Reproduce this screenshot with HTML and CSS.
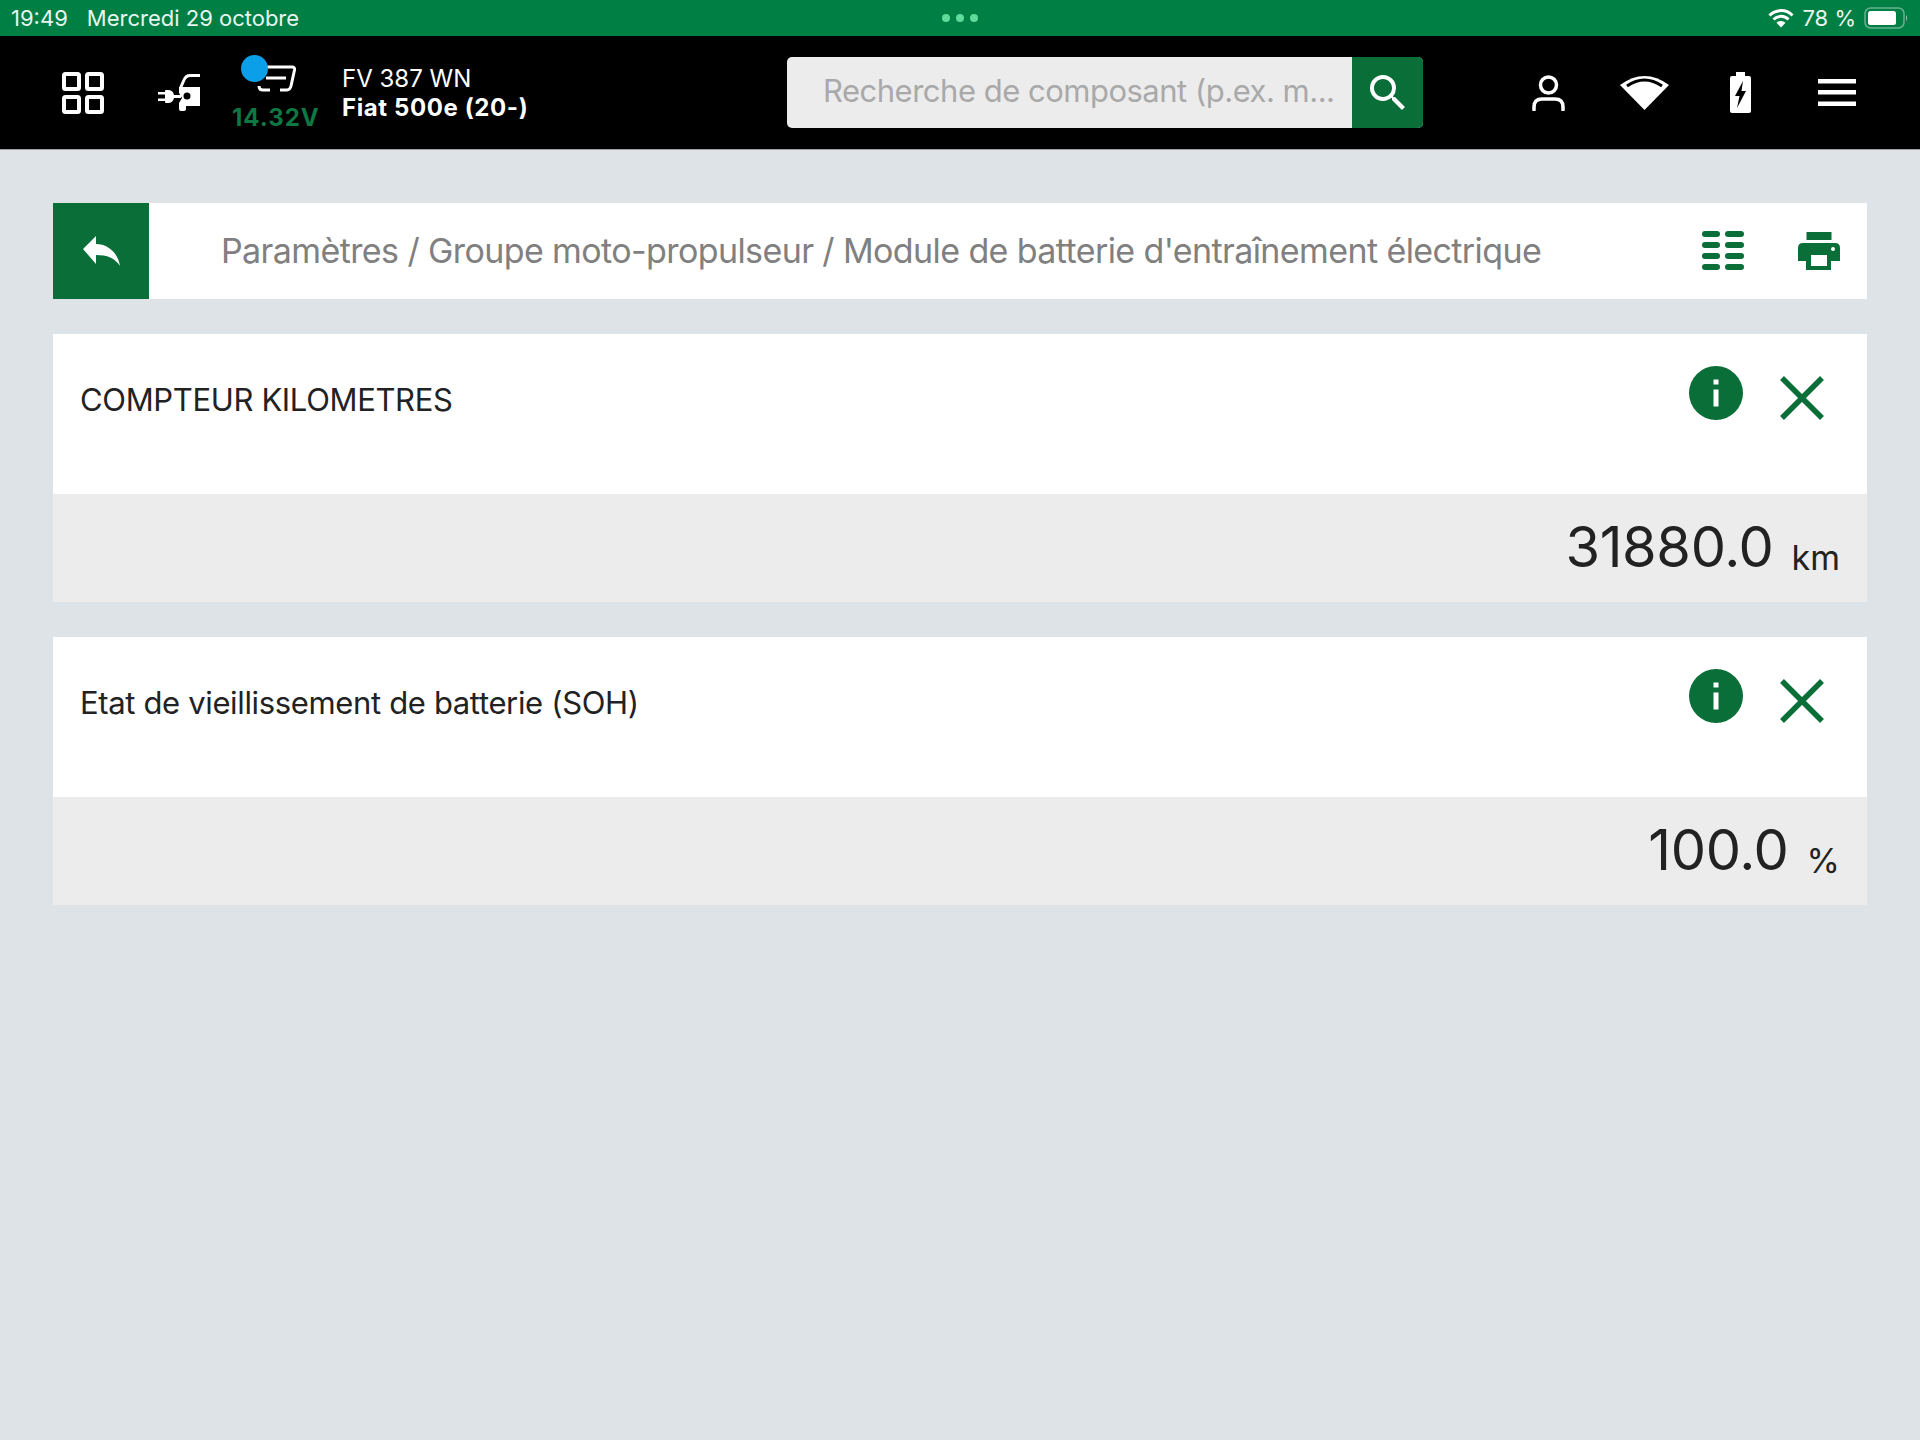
FILE: index.html
```html
<!DOCTYPE html>
<html lang="fr">
<head>
    <meta charset="UTF-8">
    <meta name="viewport" content="width=device-width, initial-scale=1.0">
    <title>Paramètres</title>
    <link rel="stylesheet" href="styles.css">
</head>
<body>
    <!-- barre de statut -->
    <div class="status-bar">
        <div class="status-left"><span>19:49</span><span>Mercredi 29 octobre</span></div>
        <div class="status-dots"><i></i><i></i><i></i></div>
        <div class="status-right">
            <svg class="status-wifi" width="26" height="19" viewBox="0 0 26 19">
                <path d="M1.5 6.5a16 16 0 0 1 23 0M5.5 10.5a10.500 10.500 0 0 1 15 0" fill="none" stroke="#fff" stroke-width="3"/>
                <path d="M13 18.500L8.500 13.800a6.500 6.500 0 0 1 9 0z" fill="#fff"/>
            </svg>
            <span>78 %</span>
            <svg width="45" height="22" viewBox="0 0 45 22">
                <rect x="1" y="1" width="39" height="20" rx="5.500" fill="none" stroke="#fff" stroke-opacity="0.4" stroke-width="1.500"/>
                <rect x="4" y="4" width="28" height="14" rx="2.500" fill="#fff"/>
                <path d="M42 8c1.500.5 1.500 5.500 0 6z" fill="#fff" fill-opacity="0.5"/>
            </svg>
        </div>
    </div>

    <!-- en-tete -->
    <header class="top-bar">
        <div class="top-left">
            <svg class="icon-grid" width="42" height="42" viewBox="0 0 42 42" fill="none" stroke="#fff" stroke-width="4">
                <rect x="2" y="2" width="15" height="15" rx="1.500"/>
                <rect x="25" y="2" width="15" height="15" rx="1.500"/>
                <rect x="2" y="25" width="15" height="15" rx="1.500"/>
                <rect x="25" y="25" width="15" height="15" rx="1.500"/>
            </svg>
            <svg class="icon-plug" width="42" height="37" viewBox="0 0 42 37" fill="#fff">
                <path d="M42 1.500H32q-4 0-6 4.500l-3.500 8" fill="none" stroke="#fff" stroke-width="3"/>
                <path d="M21 13h21v19H28v3q0 2-2 2h-3q-2 0-2-2v-6l3-5-3-5z"/>
                <circle cx="29" cy="22" r="3.500" fill="#000"/>
                <path d="M0 18h7v-1q0-1 1-1h2q5 0 6 5h7v3h-7q-1 5-6 5H8q-1 0-1-1v-1H0v-2.500h7v-4H0z"/>
            </svg>
            <div class="volt-box">
                <span class="volt-dot"></span>
                <svg class="icon-car" width="40" height="28" viewBox="0 0 40 28" fill="none" stroke="#fff" stroke-width="3">
                    <path d="M8 3h27q3 0 2.500 3L34 22q-1 4-4 4h-7M13 26H6q-4 0-4-4"/>
                    <path d="M9 14h20"/>
                </svg>
                <div class="volt-text">14.32V</div>
            </div>
            <div class="vehicle">
                <div>FV 387 WN</div>
                <div class="vehicle-name">Fiat 500e (20-)</div>
            </div>
        </div>
        <div class="search">
            <span class="search-text">Recherche de composant (p.ex. m...</span>
            <div class="search-btn">
                <svg width="48" height="48" viewBox="0 0 24 24" fill="#fff"><path d="M15.500 14h-.79l-.28-.27A6.471 6.471 0 0 0 16 9.500 6.500 6.500 0 1 0 9.500 16c1.610 0 3.090-.59 4.230-1.570l.27.28v.79l5 4.990L20.490 19l-4.990-5zm-6 0C7.010 14 5 11.990 5 9.500S7.010 5 9.500 5 14 7.010 14 9.500 11.990 14 9.500 14z"/></svg>
            </div>
        </div>
        <div class="top-right">
            <svg class="tool-user" width="33" height="36" viewBox="0 0 33 36" fill="none" stroke="#fff" stroke-width="3.500">
                <circle cx="16.500" cy="10" r="8"/>
                <path d="M2 35v-3q0-8 8-8h13q8 0 8 8v3" stroke-linecap="round"/>
            </svg>
            <svg class="tool-wifi" width="49" height="35" viewBox="0 0 49 35">
                <path d="M24.500 35L0 10Q24.500-8 49 10z" fill="#fff"/>
                <path d="M7 11Q24.500-1 42 11" fill="none" stroke="#000" stroke-width="3"/>
            </svg>
            <svg class="tool-batt" width="21" height="41" viewBox="0 0 21 41">
                <path d="M6 0h9v4h4q2 0 2 2v33q0 2-2 2H2q-2 0-2-2V6q0-2 2-2h4z" fill="#fff"/>
                <path d="M13 9L5 24h4.500L7 36l9-17h-4.500z" fill="#000"/>
            </svg>
            <svg class="tool-menu" width="38" height="27" viewBox="0 0 38 27" fill="#fff">
                <rect width="38" height="4.500" y="0"/>
                <rect width="38" height="4.500" y="11"/>
                <rect width="38" height="4.500" y="22.500"/>
            </svg>
        </div>
    </header>

    <main class="content">
        <div class="crumb-bar">
            <div class="back-btn">
                <svg width="37" height="30" viewBox="0 0 37 30" fill="#fff"><path d="M0 13L13 0v8c12 0 22 9 24 22-5-8-13-11-24-11v9z"/></svg>
            </div>
            <div class="crumb-text">Paramètres / Groupe moto-propulseur / Module de batterie d'entraînement électrique</div>
            <div class="crumb-actions">
                <svg width="42" height="40" viewBox="0 0 42 40" fill="#0a6e38">
                    <rect x="0" y="0" width="18" height="6" rx="3"/><rect x="23" y="0" width="19" height="6" rx="3"/>
                    <rect x="0" y="11" width="18" height="6" rx="3"/><rect x="23" y="11" width="19" height="6" rx="3"/>
                    <rect x="0" y="22" width="18" height="6" rx="3"/><rect x="23" y="22" width="19" height="6" rx="3"/>
                    <rect x="0" y="33" width="18" height="6" rx="3"/><rect x="23" y="33" width="19" height="6" rx="3"/>
                </svg>
                <svg width="42" height="38" viewBox="0 0 42 38">
                    <rect x="8.500" y="0" width="25" height="8" fill="#0a6e38"/>
                    <path d="M5 11h32q5 0 5 5v13H33v9H8v-9H0V16q0-5 5-5z" fill="#0a6e38"/>
                    <rect x="13" y="23" width="16" height="11" fill="#fff"/>
                    <circle cx="35" cy="17" r="2" fill="#fff"/>
                </svg>
            </div>
        </div>

        <section class="param-card">
            <div class="param-head">
                <div class="param-title">COMPTEUR KILOMETRES</div>
                <svg class="icon-info" width="54" height="54" viewBox="0 0 54 54">
                    <circle cx="27" cy="27" r="27" fill="#0a6e38"/>
                    <rect x="24.500" y="13.500" width="5" height="5" fill="#fff"/>
                    <rect x="24.500" y="23.500" width="5" height="17" fill="#fff"/>
                </svg>
                <svg class="icon-close" width="46" height="46" viewBox="0 0 46 46"><path d="M3 3l40 40M43 3L3 43" stroke="#0a6e38" stroke-width="5.500"/></svg>
            </div>
            <div class="param-value"><span class="value-num">31880.0</span><span class="value-unit">km</span></div>
        </section>

        <section class="param-card">
            <div class="param-head">
                <div class="param-title">Etat de vieillissement de batterie (SOH)</div>
                <svg class="icon-info" width="54" height="54" viewBox="0 0 54 54">
                    <circle cx="27" cy="27" r="27" fill="#0a6e38"/>
                    <rect x="24.500" y="13.500" width="5" height="5" fill="#fff"/>
                    <rect x="24.500" y="23.500" width="5" height="17" fill="#fff"/>
                </svg>
                <svg class="icon-close" width="46" height="46" viewBox="0 0 46 46"><path d="M3 3l40 40M43 3L3 43" stroke="#0a6e38" stroke-width="5.500"/></svg>
            </div>
            <div class="param-value"><span class="value-num">100.0</span><span class="value-unit">%</span></div>
        </section>
    </main>
</body>
</html>
```

FILE: styles.css
```css
* {
    box-sizing: border-box;
}
html, body {
    height: 100%;
}
body {
    margin: 0;
    font-family: Inter, Roboto, "Liberation Sans", sans-serif;
    background: #dee3e7;
    color: #222;
}
svg {
    display: block;
    flex: none;
}

/* barre de statut */
.status-bar {
    height: 36px;
    background: #007f45;
    color: #e9f5ee;
    display: grid;
    grid-template-columns: 1fr auto 1fr;
    align-items: center;
    font-size: 22px;
}
.status-left {
    display: flex;
    gap: 19px;
    padding-left: 11px;
}
.status-dots {
    display: flex;
    gap: 6px;
}
.status-dots i {
    width: 8px;
    height: 8px;
    border-radius: 50%;
    background: #5fdc9b;
}
.status-right {
    display: flex;
    justify-content: flex-end;
    align-items: center;
    gap: 7px;
    padding-right: 11px;
}
.status-right span {
    margin-right: 1px;
}
.status-wifi {
    margin-right: 1px;
}

/* en-tete */
.top-bar {
    height: 114px;
    background: #000;
    display: flex;
    align-items: center;
    color: #fff;
    border-bottom: 1px solid #9aa0a4;
}
.top-left {
    width: 787px;
    display: flex;
    align-items: center;
    padding-left: 62px;
}
.icon-plug {
    margin-left: 54px;
}
.volt-box {
    position: relative;
    width: 85px;
    margin-left: 33px;
    padding-top: 8px;
}
.icon-car {
    margin-left: 24px;
}
.volt-dot {
    position: absolute;
    left: 8px;
    top: -1px;
    width: 27px;
    height: 27px;
    border-radius: 50%;
    background: #0a9fe8;
}
.volt-text {
    margin-top: 14px;
    margin-left: -1px;
    font-size: 24px;
    line-height: 24px;
    letter-spacing: 1px;
    font-weight: 700;
    color: #0f7743;
    white-space: nowrap;
}
.vehicle {
    margin-left: 24px;
    font-size: 24px;
    line-height: 29px;
    white-space: nowrap;
}
.vehicle-name {
    font-weight: 700;
    letter-spacing: 0.6px;
}
.search {
    width: 636px;
    height: 71px;
    display: flex;
    background: #ececec;
    border-radius: 5px;
    overflow: hidden;
}
.search-text {
    flex: 1;
    padding-left: 36px;
    font-size: 31px;
    line-height: 68px;
    letter-spacing: -0.5px;
    color: #a9a9a9;
    white-space: nowrap;
}
.search-btn {
    width: 71px;
    background: #0a6e38;
    display: flex;
    align-items: center;
    justify-content: center;
}
.top-right {
    flex: 1;
    display: flex;
    align-items: center;
    padding-left: 109px;
}
.tool-wifi {
    margin-left: 55px;
}
.tool-batt {
    margin-left: 61px;
}
.tool-menu {
    margin-left: 67px;
}

/* contenu */
.content {
    padding: 53px 53px 0;
}
.crumb-bar {
    height: 96px;
    background: #fff;
    display: flex;
    align-items: center;
}
.back-btn {
    width: 96px;
    height: 96px;
    background: #0a6e38;
    display: flex;
    align-items: center;
    justify-content: center;
}
.crumb-text {
    flex: 1;
    margin: 0 0 2px 72px;
    font-size: 34px;
    letter-spacing: -0.6px;
    color: #808080;
    white-space: nowrap;
}
.crumb-actions {
    display: flex;
    align-items: center;
    gap: 54px;
    padding-right: 27px;
}
.param-card {
    margin-top: 35px;
}
.param-head {
    height: 160px;
    background: #fff;
    display: flex;
    align-items: flex-start;
    padding: 32px 42px 0 27px;
}
.param-title {
    flex: 1;
    font-size: 31px;
    line-height: 46px;
    letter-spacing: -0.35px;
    margin-top: 11px;
}
.icon-close {
    margin: 9px 0 0 36px;
}
.param-value {
    height: 108px;
    background: #ececed;
    display: flex;
    justify-content: flex-end;
    align-items: flex-end;
    gap: 18px;
    padding: 0 27px 19px 0;
}
.value-num {
    font-size: 56px;
    line-height: 72px;
    letter-spacing: -0.35px;
}
.value-unit {
    font-size: 34px;
    line-height: 50px;
}
```
